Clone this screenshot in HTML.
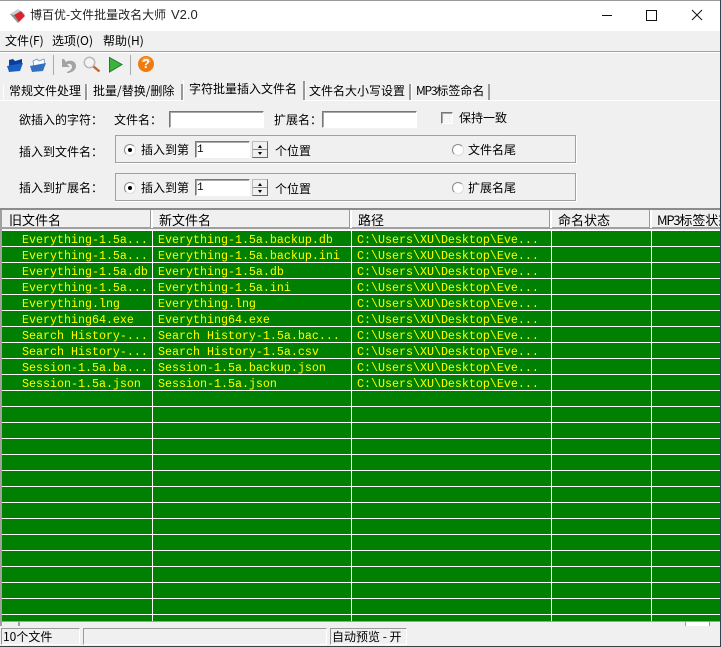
<!DOCTYPE html>
<html><head><meta charset="utf-8">
<style>
html,body{margin:0;padding:0;width:721px;height:647px;overflow:hidden;background:#f0f0f0}
body{position:relative;font-family:"WenQuanYi Zen Hei","Noto Sans CJK SC",sans-serif;font-size:12px;color:#000}
.a{position:absolute}
.t{position:absolute;white-space:nowrap;line-height:16px;height:16px}
.in{position:absolute;background:#fff;box-sizing:border-box;border:1px solid;border-color:#777 #fff #fff #777;box-shadow:inset 1px 1px 0 #a8a8a8}
.grp{position:absolute;left:115px;width:461px;height:28px;box-sizing:border-box;border:1px solid #a0a0a0;box-shadow:1px 1px 0 #fff}
.radio{position:absolute;width:10px;height:10px;border-radius:50%;background:#fff;border:1px solid;border-color:#888 #ddd #ddd #888;box-sizing:content-box}
.radio.on::after{content:"";position:absolute;left:3px;top:3px;width:4px;height:4px;border-radius:50%;background:#000}
.spin{position:absolute;left:252px;width:16px;height:17px;background:#f0f0f0;box-sizing:border-box;border:1px solid;border-color:#bbb #666 #666 #bbb}
.spin i{position:absolute;left:0;right:0;top:7px;height:1px;background:#888}
.spin b{position:absolute;left:5px;width:0;height:0;border-left:2px solid transparent;border-right:2px solid transparent}
.tab{position:absolute;top:84px;height:16px;border-right:2px solid #999;border-left:1px solid #fff;box-sizing:border-box}
.m{font-family:"Liberation Mono",monospace;font-size:11.67px;color:#ff0;line-height:16px;height:16px}
.hd{position:absolute;top:212px;height:16px;line-height:16px;font-size:13px;white-space:nowrap}
.sep{position:absolute;top:210px;width:2px;height:18px;background:#fff;border-left:1px solid #999}
.v{position:absolute;top:231px;width:1px;height:390px;background:#fff}
.n{letter-spacing:-1.2px}
</style></head><body>
<!-- title bar -->
<div class="a" style="left:0;top:0;width:721px;height:31px;background:#fff"></div>
<div class="a" style="left:0;top:0;width:721px;height:1px;background:#999"></div>
<svg class="a" style="left:8px;top:7px" width="20" height="18" viewBox="0 0 20 18">
<path d="M2 7 L10 2 L17 7 L10 16 Z" fill="#c9cdd6"/><path d="M6 8 L13 4 L17 9 L11 15 Z" fill="#d8232e"/><path d="M2 7 L6 8 L11 15 L10 16Z" fill="#8a8f9c"/></svg>
<div class="t" style="left:30px;top:7px;font-family:'Noto Sans CJK SC',sans-serif;font-size:12px;color:#222">博百优-文件批量改名大师</div>
<div class="t" style="left:171px;top:7px;font-family:'Liberation Sans',sans-serif;font-size:13px;color:#222">V2.0</div>
<svg class="a" style="left:596px;top:5px" width="115" height="20" viewBox="0 0 115 20" fill="none" stroke="#111" stroke-width="1">
<path d="M6 10.5H16"/><rect x="50.5" y="5.5" width="10" height="10"/><path d="M96 5L106 15M106 5L96 15"/></svg>
<!-- menu -->
<div class="t" style="left:5px;top:33px;font-size:12px">文件(F)</div>
<div class="t" style="left:52px;top:33px">选项(O)</div>
<div class="t" style="left:103px;top:33px">帮助(H)</div>
<div class="a" style="left:0;top:51px;width:721px;height:1px;background:#a0a0a0"></div>
<div class="a" style="left:0;top:52px;width:721px;height:1px;background:#fff"></div>
<!-- toolbar -->
<svg class="a" style="left:0;top:52px" width="160" height="26" viewBox="0 0 160 26">
<path d="M9 8l4-1 2 2 7-2v6L9 16z" fill="#0a3f99"/><path d="M7 14l16-3-3 8-11 1z" fill="#1c5fc4"/>
<path d="M33 9l4-2 2 2 5-2 1 5-11 3z" fill="#fff" stroke="#6c8fc0" stroke-width=".8"/><path d="M30 14l16-3-3 8-11 1z" fill="#3470c0"/>
<path d="M62 7v8h8l-3-2.5c3-1.5 5 0 5 2.5s-3 4-5 5v1h1c4-.5 8-3 8-7 0-5-6-7-10-4l-2-3z" fill="#a4a4a4"/>
<circle cx="89.5" cy="10.5" r="5.2" fill="#f4f4f4" stroke="#bcbcbc" stroke-width="1.6"/><path d="M93.5 14.5l6 5" stroke="#c4622d" stroke-width="2.4"/>
<path d="M109.5 5.5l12.5 7-12.5 7.5z" fill="#3cb43c" stroke="#1c7d2c"/>
</svg>
<div class="a" style="left:53px;top:55px;width:1px;height:20px;background:#aaa"></div>
<div class="a" style="left:130px;top:55px;width:1px;height:20px;background:#aaa"></div>
<svg class="a" style="left:137px;top:55px" width="18" height="18" viewBox="0 0 18 18"><circle cx="9" cy="9" r="8" fill="#ee7a10"/><path d="M4 7a5 5 0 0 1 10 0" fill="#f8b060" opacity=".6"/></svg>
<div class="t" style="left:142px;top:56px;color:#fff;font-family:'Liberation Sans',sans-serif;font-weight:bold;font-size:13px">?</div>
<!-- tabs -->
<div class="tab" style="left:3px;width:84px"></div>
<div class="tab" style="left:87px;width:96px"></div>
<div class="tab" style="left:305px;width:106px"></div>
<div class="tab" style="left:411px;width:79px"></div>
<div class="a" style="left:0;top:100px;width:721px;height:1px;background:#fff"></div>
<div class="a" style="left:183px;top:80px;width:120px;height:21px;background:#f0f0f0;border-left:1px solid #fff"></div>
<div class="a" style="left:303px;top:81px;width:2px;height:19px;background:#999"></div>
<div class="t" style="left:9px;top:83px">常规文件处理</div>
<div class="t" style="left:93px;top:83px">批量/替换/删除</div>
<div class="t" style="left:189px;top:81px">字符批量插入文件名</div>
<div class="t" style="left:309px;top:83px">文件名大小写设置</div>
<div class="t" style="left:416px;top:83px"><span class="n">MP3</span>标签命名</div>
<!-- form -->
<div class="t" style="left:19px;top:112px">欲插入的字符：</div>
<div class="t" style="left:114px;top:112px">文件名：</div>
<div class="in" style="left:169px;top:111px;width:95px;height:17px"></div>
<div class="t" style="left:274px;top:112px">扩展名：</div>
<div class="in" style="left:322px;top:111px;width:95px;height:17px"></div>
<div class="in" style="left:441px;top:112px;width:12px;height:12px;background:#f6f6f6"></div>
<div class="t" style="left:459px;top:110px">保持一致</div>
<div class="t" style="left:19px;top:144px">插入到文件名：</div>
<div class="grp" style="top:135px"></div>
<div class="radio on" style="left:124px;top:144px"></div>
<div class="t" style="left:141px;top:142px">插入到第</div>
<div class="in" style="left:195px;top:141px;width:55px;height:17px"></div>
<div class="t" style="left:197px;top:142px;font-family:'Liberation Mono',monospace;font-size:11px">1</div>
<div class="spin" style="top:141px"><b style="top:3px;border-bottom:3px solid #000"></b><i></i><b style="top:10px;border-top:3px solid #000"></b></div>
<div class="t" style="left:275px;top:143px">个位置</div>
<div class="radio" style="left:452px;top:144px"></div>
<div class="t" style="left:468px;top:142px">文件名尾</div>
<div class="t" style="left:19px;top:180px">插入到扩展名：</div>
<div class="grp" style="top:173px"></div>
<div class="radio on" style="left:124px;top:182px"></div>
<div class="t" style="left:141px;top:180px">插入到第</div>
<div class="in" style="left:195px;top:179px;width:55px;height:17px"></div>
<div class="t" style="left:197px;top:180px;font-family:'Liberation Mono',monospace;font-size:11px">1</div>
<div class="spin" style="top:179px"><b style="top:3px;border-bottom:3px solid #000"></b><i></i><b style="top:10px;border-top:3px solid #000"></b></div>
<div class="t" style="left:275px;top:181px">个位置</div>
<div class="radio" style="left:452px;top:182px"></div>
<div class="t" style="left:468px;top:180px">扩展名尾</div>
<div class="a" style="left:0;top:208px;width:721px;height:2px;background:#8c8c8c"></div>
<!-- list header -->
<div class="a" style="left:0;top:210px;width:721px;height:18px;background:#f0f0f0;overflow:hidden">
</div>
<div class="a" style="left:2px;top:227px;width:719px;height:2px;background:#a0a0a0"></div>
<div class="a" style="left:0;top:210px;width:2px;height:412px;background:#a0a0a0"></div>
<div class="hd" style="left:9px">旧文件名</div>
<div class="hd" style="left:159px">新文件名</div>
<div class="hd" style="left:358px">路径</div>
<div class="hd" style="left:558px">命名状态</div>
<div class="hd" style="left:657px;width:63px;overflow:hidden"><span class="n">MP3</span>标签状态</div>
<div class="sep" style="left:150px"></div><div class="sep" style="left:349px"></div><div class="sep" style="left:549px"></div><div class="sep" style="left:649px"></div>
<!-- list body -->
<div class="a" style="left:2px;top:229px;width:718px;height:392px;background:#f0f0f0"></div>
<div class="a" style="left:2px;top:230px;width:718px;height:391px;background:repeating-linear-gradient(to bottom,#fff 0,#fff 1px,#008000 1px,#008000 16px)"></div>
<div class="v" style="left:152px"></div><div class="v" style="left:351px"></div><div class="v" style="left:551px"></div><div class="v" style="left:651px"></div>
<div class="t m" style="left:22px;top:232px">Everything-1.5a...</div><div class="t m" style="left:158px;top:232px">Everything-1.5a.backup.db</div><div class="t m" style="left:357px;top:232px">C:\Users\XU\Desktop\Eve...</div>
<div class="t m" style="left:22px;top:248px">Everything-1.5a...</div><div class="t m" style="left:158px;top:248px">Everything-1.5a.backup.ini</div><div class="t m" style="left:357px;top:248px">C:\Users\XU\Desktop\Eve...</div>
<div class="t m" style="left:22px;top:264px">Everything-1.5a.db</div><div class="t m" style="left:158px;top:264px">Everything-1.5a.db</div><div class="t m" style="left:357px;top:264px">C:\Users\XU\Desktop\Eve...</div>
<div class="t m" style="left:22px;top:280px">Everything-1.5a...</div><div class="t m" style="left:158px;top:280px">Everything-1.5a.ini</div><div class="t m" style="left:357px;top:280px">C:\Users\XU\Desktop\Eve...</div>
<div class="t m" style="left:22px;top:296px">Everything.lng</div><div class="t m" style="left:158px;top:296px">Everything.lng</div><div class="t m" style="left:357px;top:296px">C:\Users\XU\Desktop\Eve...</div>
<div class="t m" style="left:22px;top:312px">Everything64.exe</div><div class="t m" style="left:158px;top:312px">Everything64.exe</div><div class="t m" style="left:357px;top:312px">C:\Users\XU\Desktop\Eve...</div>
<div class="t m" style="left:22px;top:328px">Search History-...</div><div class="t m" style="left:158px;top:328px">Search History-1.5a.bac...</div><div class="t m" style="left:357px;top:328px">C:\Users\XU\Desktop\Eve...</div>
<div class="t m" style="left:22px;top:344px">Search History-...</div><div class="t m" style="left:158px;top:344px">Search History-1.5a.csv</div><div class="t m" style="left:357px;top:344px">C:\Users\XU\Desktop\Eve...</div>
<div class="t m" style="left:22px;top:360px">Session-1.5a.ba...</div><div class="t m" style="left:158px;top:360px">Session-1.5a.backup.json</div><div class="t m" style="left:357px;top:360px">C:\Users\XU\Desktop\Eve...</div>
<div class="t m" style="left:22px;top:376px">Session-1.5a.json</div><div class="t m" style="left:158px;top:376px">Session-1.5a.json</div><div class="t m" style="left:357px;top:376px">C:\Users\XU\Desktop\Eve...</div>
<div class="a" style="left:0;top:621px;width:720px;height:1px;background:#a0a0a0"></div>
<!-- scrollbar remnants -->
<div class="a" style="left:0;top:622px;width:2px;height:4px;background:#a0a0a0"></div>
<div class="a" style="left:18px;top:622px;width:2px;height:4px;background:#a0a0a0"></div>
<div class="a" style="left:685px;top:622px;width:25px;height:4px;background:#fff;border-left:1px solid #999;border-right:1px solid #999;box-sizing:border-box"></div>
<!-- status bar -->
<div class="a" style="left:1px;top:628px;width:79px;height:17px;box-sizing:border-box;border:1px solid;border-color:#999 #fff #fff #999"></div>
<div class="a" style="left:83px;top:628px;width:244px;height:17px;box-sizing:border-box;border:1px solid;border-color:#999 #fff #fff #999"></div>
<div class="a" style="left:330px;top:628px;width:77px;height:17px;box-sizing:border-box;border:1px solid;border-color:#999 #fff #fff #999"></div>
<div class="t" style="left:3px;top:629px">10个文件</div>
<div class="t" style="left:332px;top:629px">自动预览 - 开</div>
<div class="a" style="left:720px;top:0;width:1px;height:647px;background:#2f4550"></div>
<div class="a" style="left:0;top:646px;width:721px;height:1px;background:#3a4248"></div>
</body></html>
